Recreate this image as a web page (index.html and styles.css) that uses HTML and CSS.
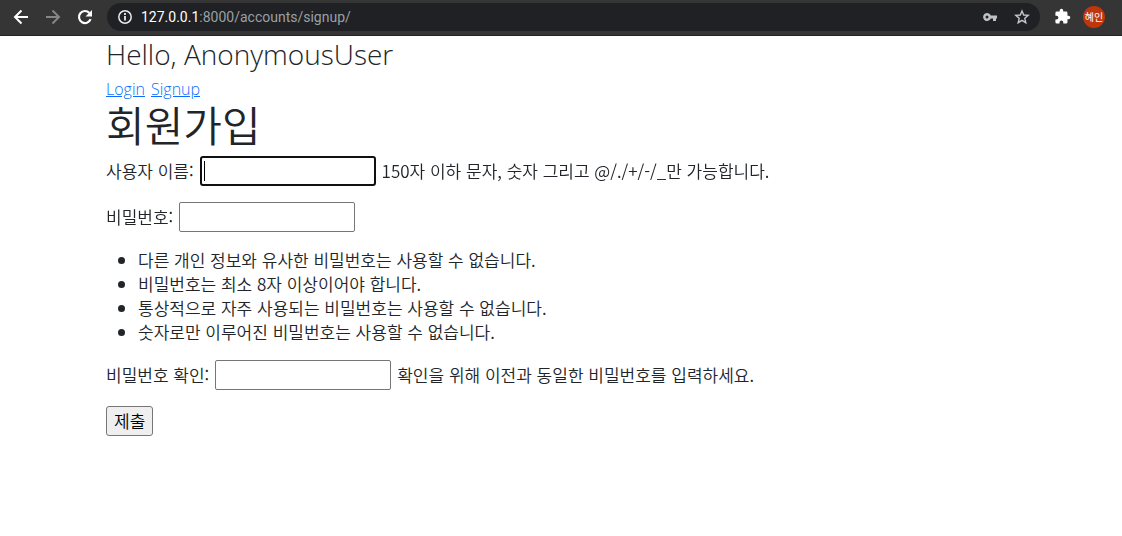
FILE: index.html
```html
<!DOCTYPE html>
<html lang="ko">
<head>
<meta charset="utf-8">
<title>회원가입</title>
<link rel="stylesheet" href="styles.css">
</head>
<body>
<header class="toolbar">
  <button class="tool" type="button" aria-label="뒤로"><svg width="16" height="16" viewBox="0 0 16 16" fill="none" stroke="#fff" stroke-width="2"><path d="M15 8H2M8.500 1.500L2 8l6.500 6.500"/></svg></button>
  <button class="tool" type="button" aria-label="앞으로"><svg width="16" height="16" viewBox="0 0 16 16" fill="none" stroke="#868686" stroke-width="2"><path d="M1 8h13M7.500 1.500L14 8l-6.500 6.500"/></svg></button>
  <button class="tool" type="button" aria-label="새로고침"><svg width="16" height="16" viewBox="0 0 16 16"><path d="M13.600 10.200A6 6 0 1 1 12.400 3.900" fill="none" stroke="#fff" stroke-width="2.200"/><path d="M15 1v6.500H8.500z" fill="#fff"/></svg></button>
  <div class="address">
    <svg width="16" height="16" viewBox="0 0 16 16" fill="none" stroke="#e8eaed"><circle cx="8" cy="8" r="6.200" stroke-width="1.500"/><path d="M8 7v4.500M8 4v2" stroke-width="1.800"/></svg>
    <span class="url"><span class="host">127.0.0.1</span>:8000/accounts/signup/</span>
    <button class="tool" type="button" aria-label="비밀번호 관리"><svg width="16" height="16" viewBox="0 0 16 16" fill="#bdc1c6" fill-rule="evenodd"><path d="M8.800 6.500A4 4 0 1 0 8.800 9.500H11V12h3V9.500h1v-3zM5 6.500a1.500 1.500 0 1 1 0 3 1.500 1.500 0 0 1 0-3z"/></svg></button>
    <button class="tool" type="button" aria-label="북마크"><svg width="16" height="16" viewBox="0 0 16 16" fill="none" stroke="#c4c7cb" stroke-width="1.400"><path d="M8 2l1.700 4 4.500.4-3.400 2.900 1 4.400L8 11.400l-3.800 2.300 1-4.400-3.400-2.900 4.500-.4z"/></svg></button>
  </div>
  <button class="tool" type="button" aria-label="확장 프로그램"><svg width="17" height="17" viewBox="0 0 24 24" fill="#fff"><path d="M20.500 11H19V7a2 2 0 0 0-2-2h-4V3.500a2.500 2.500 0 0 0-5 0V5H4a2 2 0 0 0-2 2v3.800h1.500a2.700 2.700 0 0 1 0 5.400H2V20a2 2 0 0 0 2 2h3.800v-1.500a2.700 2.700 0 0 1 5.400 0V22H17a2 2 0 0 0 2-2v-4h1.500a2.500 2.500 0 0 0 0-5z"/></svg></button>
  <button class="avatar" type="button">혜인</button>
</header>
<main class="container">
  <h3 class="greeting">Hello, AnonymousUser</h3>
  <nav class="links"><a href="#login">Login</a><a href="#signup">Signup</a></nav>
  <h1 class="title">회원가입</h1>
  <form class="form">
    <div class="row"><label for="username">사용자 이름:</label><input class="field" id="username" type="text" autofocus><span>150자 이하 문자, 숫자 그리고 @/./+/-/_만 가능합니다.</span></div>
    <div class="row"><label for="password1">비밀번호:</label><input class="field" id="password1" type="password"></div>
    <ul class="rules">
      <li>다른 개인 정보와 유사한 비밀번호는 사용할 수 없습니다.</li>
      <li>비밀번호는 최소 8자 이상이어야 합니다.</li>
      <li>통상적으로 자주 사용되는 비밀번호는 사용할 수 없습니다.</li>
      <li>숫자로만 이루어진 비밀번호는 사용할 수 없습니다.</li>
    </ul>
    <div class="row"><label for="password2">비밀번호 확인:</label><input class="field" id="password2" type="password"><span>확인을 위해 이전과 동일한 비밀번호를 입력하세요.</span></div>
    <button class="submit" type="submit">제출</button>
  </form>
</main>
</body>
</html>
```
FILE: styles.css
```css
* { box-sizing: border-box; }
body {
  margin: 0;
  background: #fff;
  color: #212529;
  font: 350 17px/24px "Noto Sans CJK KR", sans-serif;
}
button, input { font: inherit; }
.toolbar {
  display: flex;
  align-items: center;
  gap: 16px;
  height: 36px;
  padding: 0 16px 2px 13px;
  background: #353535;
  border-bottom: 1px solid #242424;
}
.tool {
  display: flex;
  padding: 0;
  border: 0;
  background: none;
}
.address {
  display: flex;
  flex: 1;
  align-items: center;
  gap: 16px;
  height: 28px;
  margin-right: -2px;
  margin-left: -2px;
  padding: 0 10px;
  border-radius: 14px;
  background: #202124;
}
.url {
  flex: 1;
  margin-left: -8px;
  color: #9aa0a6;
  font: 400 14px/20px Roboto, sans-serif;
}
.host { color: #fff; }
.avatar {
  width: 22px;
  height: 22px;
  margin-right: 1px;
  margin-left: -4px;
  padding: 0;
  border: 0;
  border-radius: 50%;
  background: #bf360c;
  color: #fff;
  font-size: 10px;
  font-weight: 400;
  line-height: 20px;
}
.container {
  max-width: 934px;
  margin: 0 auto;
  padding: 0 12px;
}
.greeting {
  margin: 0 0 6px;
  font: 340 28px/36px "Open Sans", sans-serif;
}
.links {
  display: flex;
  gap: 6px;
  font: 340 16px/22px "Open Sans", sans-serif;
}
.links a { color: #0d6efd; }
.title {
  margin: 0 0 8px;
  font-size: 42px;
  font-weight: 350;
  line-height: 48px;
}
.row {
  display: flex;
  flex-wrap: wrap;
  align-items: center;
  gap: 6px;
  margin-bottom: 16px;
}
.field {
  width: 176px;
  height: 30px;
  padding: 1px 2px;
  border: 1px solid #767676;
  border-radius: 2px;
  background: #fff;
}
.field:focus {
  outline: 0;
  border: 2px solid #101010;
  border-radius: 3px;
  background: linear-gradient(#000, #000) 2px center / 1px 20px no-repeat #fff;
  caret-color: transparent;
}
.rules {
  margin: 0 0 16px;
  padding-left: 32px;
}
.submit {
  height: 30px;
  padding: 1px 7px;
  border: 1px solid #767676;
  border-radius: 3px;
  background: #efefef;
  color: #000;
}
```
